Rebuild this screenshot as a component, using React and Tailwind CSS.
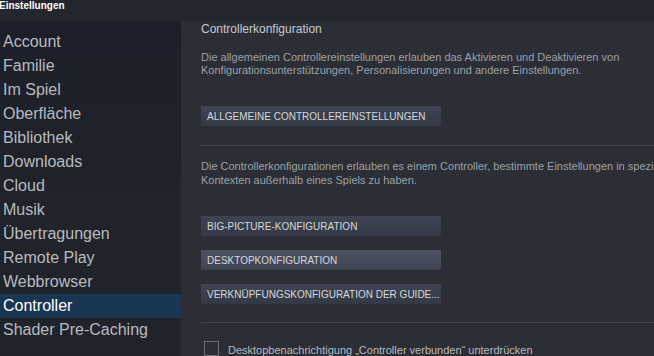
import React from "react";

const navItems = [
  "Account",
  "Familie",
  "Im Spiel",
  "Oberfläche",
  "Bibliothek",
  "Downloads",
  "Cloud",
  "Musik",
  "Übertragungen",
  "Remote Play",
  "Webbrowser",
  "Controller",
  "Shader Pre-Caching",
];

const Button = ({ children, hover }) => (
  <div
    className={
      "w-[240px] h-[20px] flex items-center pl-[6px] text-[10px] text-[#d6d9dd] whitespace-nowrap " +
      (hover
        ? "bg-gradient-to-b from-[#4c5260] to-[#3e4450]"
        : "bg-gradient-to-b from-[#3e4451] to-[#343a44]")
    }
  >
    {children}
  </div>
);

const App = () => {
  return (
    <div
      className="w-[654px] h-[356px] overflow-hidden flex flex-col bg-[#2b2e34]"
      style={{ fontFamily: '"Liberation Sans", Arial, sans-serif' }}
    >
      {/* title bar */}
      <div className="h-[21px] shrink-0 bg-[#23262c] flex items-start">
        <span className="text-[10px] font-bold text-white leading-none mt-[1px] -ml-[1px]">
          Einstellungen
        </span>
      </div>

      <div className="flex flex-1 min-h-0">
        {/* sidebar */}
        <div className="w-[181px] shrink-0 pt-[9px] bg-gradient-to-b from-[#1b1f29] via-[#202329] to-[#202329]">
          {navItems.map((item) => (
            <div
              key={item}
              className={
                "h-[24px] flex items-center pl-[3px] text-[16px] whitespace-nowrap " +
                (item === "Controller"
                  ? "bg-[#1a3552] text-white"
                  : "text-[#b7bbc0]")
              }
            >
              {item}
            </div>
          ))}
        </div>

        {/* main */}
        <div className="flex-1 pl-[20px] pt-[1px] text-[#9ba1a8] text-[11px] whitespace-nowrap">
          <div className="h-[14px] leading-[14px] text-[12px] text-[#c6cacf]">
            Controllerkonfiguration
          </div>
          <div className="mt-[15px] leading-[13px]">
            Die allgemeinen Controllereinstellungen erlauben das Aktivieren und Deaktivieren von
            <br />
            Konfigurationsunterstützungen, Personalisierungen und andere Einstellungen.
          </div>
          <div className="mt-[29px]">
            <Button>ALLGEMEINE CONTROLLEREINSTELLUNGEN</Button>
          </div>
          <div className="mt-[19px] h-px bg-[#42464d]" />
          <div className="mt-[13px] leading-[14px]">
            Die Controllerkonfigurationen erlauben es einem Controller, bestimmte Einstellungen in spezifischen
            <br />
            Kontexten außerhalb eines Spiels zu haben.
          </div>
          <div className="mt-[29px] flex flex-col gap-[14px]">
            <Button>BIG-PICTURE-KONFIGURATION</Button>
            <Button hover>DESKTOPKONFIGURATION</Button>
            <Button>VERKNÜPFUNGSKONFIGURATION DER GUIDE...</Button>
          </div>
          <div className="mt-[18px] h-px bg-[#42464d]" />
          <div className="mt-[18px] flex items-start pl-[3px]">
            <div className="w-[15px] h-[15px] border border-[#6a6e75] shrink-0" />
            <span className="ml-[9px] mt-[1px] text-[11px] text-[#b7bbc0]">
              Desktopbenachrichtigung „Controller verbunden“ unterdrücken
            </span>
          </div>
        </div>
      </div>
    </div>
  );
};

export default App;
